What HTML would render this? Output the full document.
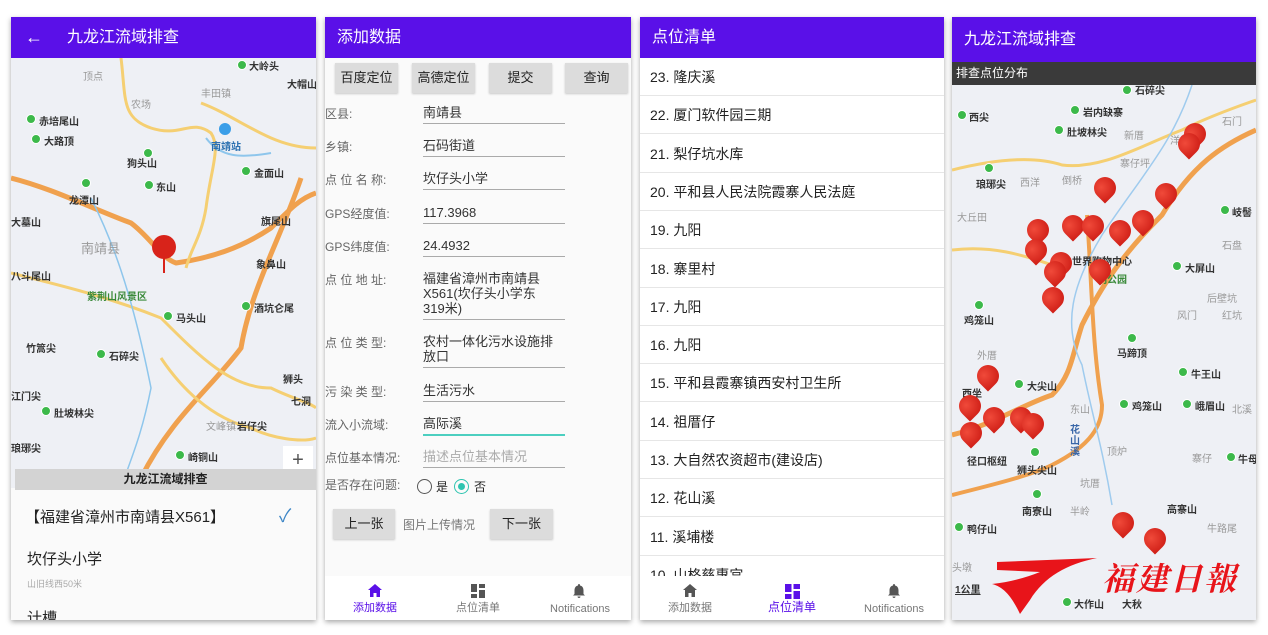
<!DOCTYPE html>
<html><head><meta charset="utf-8">
<style>
*{margin:0;padding:0;box-sizing:border-box}
body{width:1268px;height:635px;background:#fff;position:relative;overflow:hidden;font-family:"Liberation Sans","Noto Sans CJK SC",sans-serif;color:#222}
.scr{position:absolute;top:17px;height:603px;background:#fafafa;overflow:hidden;box-shadow:0 2px 5px rgba(0,0,0,.35)}
.hd{position:absolute;left:0;top:0;right:0;height:41px;background:#5a10e8;color:#fff;font-size:16px;line-height:41px}
.map{position:absolute;background:#eef0f5;overflow:hidden}
.a{position:absolute;font-size:10px;color:#333;white-space:nowrap;font-weight:bold}
.g{position:absolute;font-size:10px;color:#999;white-space:nowrap}
.p{position:absolute;width:10px;height:10px;border-radius:50%;background:#3cb94a;border:1px solid #fff}
.lab{position:absolute;left:0;font-size:12px;color:#666;white-space:nowrap}
.val{position:absolute;left:98px;width:142px;font-size:13px;color:#333;border-bottom:1.5px solid #aaa;padding-bottom:3px;line-height:15px}
.btn{position:absolute;height:30px;background:#dcdcdc;font-size:13px;text-align:center;line-height:30px;color:#222;box-shadow:0 1px 2px rgba(0,0,0,.2)}
.li{position:absolute;left:0;right:0;height:38px;border-bottom:1px solid #e6e6e6;font-size:14px;line-height:38px;padding-left:10px;color:#222;background:#fff}
.nav{position:absolute;left:0;right:0;bottom:0;height:44px;background:#fff}
.ni{position:absolute;bottom:5px;font-size:11px;color:#777;text-align:center;width:100px}
.ic{position:absolute;top:8px}
.pin{position:absolute;width:22px;height:22px;background:radial-gradient(circle at 40% 35%,#f04a3a,#c8150f);border-radius:50% 50% 50% 0;transform:rotate(-45deg)}
</style></head><body>

<!-- Screen 1 -->
<div class="scr" style="left:11px;width:305px">
 <div class="map" style="left:0;top:41px;width:305px;height:430px">
  <svg width="305" height="430" style="position:absolute;left:0;top:0">
   <path d="M0 120 C40 130 80 150 120 165 C140 180 150 200 165 205 C200 200 230 190 260 170 C280 150 290 140 305 135" stroke="#f0a14e" stroke-width="5" fill="none"/>
   <path d="M290 120 C270 180 240 230 230 290 C200 330 160 360 130 420" stroke="#f0a14e" stroke-width="5" fill="none"/>
   <path d="M110 0 C115 40 110 60 140 70 C170 80 180 60 200 75 C210 90 200 110 195 150 C190 180 180 190 175 210" stroke="#f5cf72" stroke-width="3" fill="none"/>
   <path d="M190 45 C230 60 260 90 305 90" stroke="#f5cf72" stroke-width="3" fill="none"/>
   <path d="M0 215 C60 230 100 240 150 260 C190 300 220 330 260 330 C280 340 300 345 305 350" stroke="#f5cf72" stroke-width="3" fill="none"/>
   <path d="M150 300 C170 330 200 360 240 370 C260 380 290 385 305 380" stroke="#f5cf72" stroke-width="3" fill="none"/>
   <path d="M195 80 C210 100 230 100 260 95" stroke="#8ec6ec" stroke-width="2" fill="none"/>
   <path d="M80 140 C100 180 120 230 140 330 C130 380 120 400 110 430" stroke="#8ec6ec" stroke-width="1.5" fill="none"/>
  </svg>
  <div class="g" style="left:72px;top:10px">顶点</div><div class="g" style="left:120px;top:38px">农场</div><div class="g" style="left:190px;top:27px">丰田镇</div>
  <div class="p" style="left:226px;top:2px"></div><div class="a" style="left:238px;top:0">大岭头</div><div class="a" style="left:276px;top:18px">大帽山</div>
  <div class="p" style="left:15px;top:56px"></div><div class="a" style="left:28px;top:55px">赤培尾山</div>
  <div class="p" style="left:20px;top:76px"></div><div class="a" style="left:33px;top:75px">大路顶</div>
  <div class="p" style="left:132px;top:90px"></div><div class="a" style="left:116px;top:97px">狗头山</div>
  <div style="position:absolute;left:208px;top:65px;width:12px;height:12px;border-radius:50%;background:#3a9ee8"></div><div class="a" style="left:200px;top:80px;color:#2a6fb0">南靖站</div>
  <div class="p" style="left:230px;top:108px"></div><div class="a" style="left:243px;top:107px">金面山</div>
  <div class="p" style="left:70px;top:120px"></div><div class="a" style="left:58px;top:134px">龙潭山</div>
  <div class="p" style="left:133px;top:122px"></div><div class="a" style="left:145px;top:121px">东山</div>
  <div class="a" style="left:0;top:156px">大墓山</div><div class="a" style="left:250px;top:155px">旗尾山</div><div class="a" style="left:245px;top:198px">象鼻山</div>
  <div class="g" style="left:70px;top:180px;font-size:13px">南靖县</div>
  <div style="position:absolute;left:141px;top:177px;width:24px;height:24px;border-radius:50%;background:#d8231a"></div><div style="position:absolute;left:152px;top:200px;width:2px;height:15px;background:#d8231a"></div>
  <div class="a" style="left:0;top:210px">八斗尾山</div><div class="a" style="left:76px;top:230px;color:#3a8a3a">紫荆山风景区</div>
  <div class="p" style="left:230px;top:243px"></div><div class="a" style="left:243px;top:242px">酒坑仑尾</div>
  <div class="p" style="left:152px;top:253px"></div><div class="a" style="left:165px;top:252px">马头山</div>
  <div class="a" style="left:15px;top:282px">竹篙尖</div><div class="p" style="left:85px;top:291px"></div><div class="a" style="left:98px;top:290px">石碎尖</div>
  <div class="a" style="left:0;top:330px">江门尖</div><div class="p" style="left:30px;top:348px"></div><div class="a" style="left:43px;top:347px">肚坡林尖</div>
  <div class="a" style="left:272px;top:313px">狮头</div><div class="a" style="left:280px;top:335px">七洞</div>
  <div class="g" style="left:195px;top:360px">文峰镇</div><div class="a" style="left:226px;top:360px">岩仔尖</div>
  <div class="a" style="left:0;top:382px">琅琊尖</div><div class="p" style="left:164px;top:392px"></div><div class="a" style="left:177px;top:391px">崎铜山</div>
  <div style="position:absolute;left:272px;top:388px;width:30px;height:30px;background:#fff;font-size:20px;text-align:center;line-height:28px;color:#555">+</div>
 </div>
 <div class="hd"><span style="position:absolute;left:14px;font-size:18px">←</span><span style="position:absolute;left:56px">九龙江流域排查</span></div>
 <div style="position:absolute;left:4px;top:452px;width:301px;height:21px;background:#d3d3d3;font-size:12px;font-weight:bold;text-align:center;line-height:21px">九龙江流域排查</div>
 <div style="position:absolute;left:0;top:473px;width:305px;height:130px;background:#fafafa">
  <div style="position:absolute;left:14px;top:16px;font-size:15px;color:#222">【福建省漳州市南靖县X561】</div>
  <div style="position:absolute;left:268px;top:12px;font-size:18px;color:#3d86c6">✓</div>
  <div style="position:absolute;left:16px;top:58px;font-size:15px">坎仔头小学</div>
  <div style="position:absolute;left:16px;top:87px;font-size:9px;color:#aaa">山旧线西50米</div>
  <div style="position:absolute;left:16px;top:117px;font-size:15px">计槽</div>
 </div>
</div>

<!-- Screen 2 -->
<div class="scr" style="left:325px;width:306px">
 <div class="hd"><span style="position:absolute;left:12px">添加数据</span></div>
 <div class="btn" style="left:10px;top:46px;width:63px">百度定位</div>
 <div class="btn" style="left:87px;top:46px;width:63px">高德定位</div>
 <div class="btn" style="left:164px;top:46px;width:63px">提交</div>
 <div class="btn" style="left:240px;top:46px;width:63px">查询</div>
 <div style="position:absolute;left:0;top:88px;width:306px">
  <div class="lab" style="top:0">区县:</div><div class="val" style="top:0">南靖县</div>
  <div class="lab" style="top:33px">乡镇:</div><div class="val" style="top:33px">石码街道</div>
  <div class="lab" style="top:66px">点 位 名 称:</div><div class="val" style="top:66px">坎仔头小学</div>
  <div class="lab" style="top:100px">GPS经度值:</div><div class="val" style="top:100px">117.3968</div>
  <div class="lab" style="top:133px">GPS纬度值:</div><div class="val" style="top:133px">24.4932</div>
  <div class="lab" style="top:166px">点 位 地 址:</div><div class="val" style="top:166px;width:142px;padding-right:12px">福建省漳州市南靖县X561(坎仔头小学东319米)</div>
  <div class="lab" style="top:229px">点 位 类 型:</div><div class="val" style="top:229px">农村一体化污水设施排放口</div>
  <div class="lab" style="top:278px">污 染 类 型:</div><div class="val" style="top:278px">生活污水</div>
  <div class="lab" style="top:311px">流入小流域:</div><div class="val" style="top:311px;border-bottom:2px solid #4ccfc0">高际溪</div>
  <div class="lab" style="top:344px">点位基本情况:</div><div class="val" style="top:344px;color:#aaa">描述点位基本情况</div>
 </div>
 <div class="lab" style="top:459px">是否存在问题:</div>
 <div style="position:absolute;left:92px;top:462px;width:15px;height:15px;border:1.5px solid #555;border-radius:50%"></div>
 <div style="position:absolute;left:111px;top:461px;font-size:12px">是</div>
 <div style="position:absolute;left:129px;top:462px;width:15px;height:15px;border:1.5px solid #2ec4b0;border-radius:50%"><div style="margin:2.5px;width:7px;height:7px;border-radius:50%;background:#2ec4b0"></div></div>
 <div style="position:absolute;left:149px;top:461px;font-size:12px">否</div>
 <div class="btn" style="left:8px;top:492px;width:62px">上一张</div>
 <div style="position:absolute;left:78px;top:499px;font-size:12px;color:#777">图片上传情况</div>
 <div class="btn" style="left:165px;top:492px;width:63px">下一张</div>
 <div class="nav">
  <svg class="ic" style="left:43px" width="14" height="13" viewBox="0 0 14 13"><path d="M7 0 L14 6 L12 6 L12 13 L8.5 13 L8.5 9 L5.5 9 L5.5 13 L2 13 L2 6 L0 6Z" fill="#5a10e8"/></svg>
  <div class="ni" style="left:0;color:#5a10e8">添加数据</div>
  <svg class="ic" style="left:146px" width="14" height="14"><rect x="0" y="0" width="6" height="8" fill="#555"/><rect x="0" y="10" width="6" height="4" fill="#555"/><rect x="8" y="0" width="6" height="4" fill="#555"/><rect x="8" y="6" width="6" height="8" fill="#555"/></svg>
  <div class="ni" style="left:103px">点位清单</div>
  <svg class="ic" style="left:248px" width="12" height="14" viewBox="0 0 12 14"><path d="M6 0 C7 0 7 1 7 1.5 C9.5 2 10.5 4 10.5 6.5 L10.5 10 L12 11.5 L0 11.5 L1.5 10 L1.5 6.5 C1.5 4 2.5 2 5 1.5 C5 1 5 0 6 0Z M4.5 12.5 L7.5 12.5 C7.5 13.5 6.8 14 6 14 C5.2 14 4.5 13.5 4.5 12.5Z" fill="#555"/></svg>
  <div class="ni" style="left:205px">Notifications</div>
 </div>
</div>

<!-- Screen 3 -->
<div class="scr" style="left:640px;width:304px;background:#fff">
 <div class="hd"><span style="position:absolute;left:12px">点位清单</span></div>
 <div style="position:absolute;left:0;top:41px;width:304px">
  <div class="li" style="top:0">23. 隆庆溪</div>
  <div class="li" style="top:38.3px">22. 厦门软件园三期</div>
  <div class="li" style="top:76.6px">21. 梨仔坑水库</div>
  <div class="li" style="top:114.9px">20. 平和县人民法院霞寨人民法庭</div>
  <div class="li" style="top:153.2px">19. 九阳</div>
  <div class="li" style="top:191.5px">18. 寨里村</div>
  <div class="li" style="top:229.8px">17. 九阳</div>
  <div class="li" style="top:268.1px">16. 九阳</div>
  <div class="li" style="top:306.4px">15. 平和县霞寨镇西安村卫生所</div>
  <div class="li" style="top:344.7px">14. 祖厝仔</div>
  <div class="li" style="top:383px">13. 大自然农资超市(建设店)</div>
  <div class="li" style="top:421.3px">12. 花山溪</div>
  <div class="li" style="top:459.6px">11. 溪埔楼</div>
  <div class="li" style="top:497.9px">10. 山格慈惠宫</div>
 </div>
 <div class="nav">
  <svg class="ic" style="left:43px" width="14" height="13" viewBox="0 0 14 13"><path d="M7 0 L14 6 L12 6 L12 13 L8.5 13 L8.5 9 L5.5 9 L5.5 13 L2 13 L2 6 L0 6Z" fill="#555"/></svg>
  <div class="ni" style="left:0">添加数据</div>
  <svg class="ic" style="left:145px" width="15" height="15"><rect x="0" y="0" width="6.5" height="8" fill="#5a10e8"/><rect x="0" y="10" width="6.5" height="5" fill="#5a10e8"/><rect x="8.5" y="0" width="6.5" height="5" fill="#5a10e8"/><rect x="8.5" y="7" width="6.5" height="8" fill="#5a10e8"/></svg>
  <div class="ni" style="left:102px;color:#5a10e8;font-size:12px">点位清单</div>
  <svg class="ic" style="left:248px" width="12" height="14" viewBox="0 0 12 14"><path d="M6 0 C7 0 7 1 7 1.5 C9.5 2 10.5 4 10.5 6.5 L10.5 10 L12 11.5 L0 11.5 L1.5 10 L1.5 6.5 C1.5 4 2.5 2 5 1.5 C5 1 5 0 6 0Z M4.5 12.5 L7.5 12.5 C7.5 13.5 6.8 14 6 14 C5.2 14 4.5 13.5 4.5 12.5Z" fill="#555"/></svg>
  <div class="ni" style="left:204px">Notifications</div>
 </div>
</div>

<!-- Screen 4 -->
<div class="scr" style="left:952px;width:304px">
 <div class="map" style="left:0;top:68px;width:304px;height:535px">
  <svg width="304" height="535" style="position:absolute;left:0;top:0">
   <path d="M0 85 C40 75 80 70 110 80 C150 85 190 60 230 45 C260 30 290 20 304 15" stroke="#f5cf72" stroke-width="3" fill="none"/>
   <path d="M304 45 C270 60 240 80 210 130 C170 170 150 200 130 240 C120 270 120 290 100 310 C70 320 40 340 0 350" stroke="#f0a14e" stroke-width="5" fill="none"/>
   <path d="M0 165 C40 160 70 170 100 180" stroke="#f5cf72" stroke-width="3" fill="none"/>
   <path d="M0 410 C40 400 80 390 100 380 C140 360 150 340 150 320 C140 260 140 200 135 130" stroke="#f0a14e" stroke-width="4" fill="none"/>
   <path d="M240 0 C220 60 190 90 150 150 C120 200 110 240 130 280 C140 330 150 360 160 420" stroke="#9fcbee" stroke-width="1.5" fill="none"/>
  </svg>
  <div class="p" style="left:170px;top:0"></div><div class="a" style="left:183px;top:-3px">石碎尖</div>
  <div class="p" style="left:5px;top:25px"></div><div class="a" style="left:17px;top:24px">西尖</div>
  <div class="p" style="left:118px;top:20px"></div><div class="a" style="left:131px;top:19px">岩内缺寨</div>
  <div class="p" style="left:102px;top:40px"></div><div class="a" style="left:115px;top:39px">肚坡林尖</div>
  <div class="g" style="left:172px;top:42px">新厝</div><div class="g" style="left:218px;top:47px">洋尾</div><div class="g" style="left:270px;top:28px">石门</div>
  <div class="g" style="left:168px;top:70px">寨仔坪</div>
  <div class="p" style="left:32px;top:78px"></div><div class="a" style="left:24px;top:91px">琅琊尖</div>
  <div class="g" style="left:68px;top:89px">西洋</div><div class="g" style="left:110px;top:87px">倒桥</div>
  <div class="g" style="left:5px;top:124px">大丘田</div><div class="p" style="left:268px;top:120px"></div><div class="a" style="left:280px;top:119px">岐髻</div>
  <div class="g" style="left:270px;top:152px">石盘</div>
  <div class="a" style="left:120px;top:168px">世界购物中心</div><div class="a" style="left:145px;top:186px;color:#3a8a3a">明公园</div>
  <div class="p" style="left:220px;top:176px"></div><div class="a" style="left:233px;top:175px">大屏山</div>
  <div class="g" style="left:255px;top:205px">后壁坑</div><div class="g" style="left:225px;top:222px">风门</div><div class="g" style="left:270px;top:222px">红坑</div>
  <div class="p" style="left:22px;top:215px"></div><div class="a" style="left:12px;top:227px">鸡笼山</div>
  <div class="p" style="left:175px;top:248px"></div><div class="a" style="left:165px;top:260px">马蹄顶</div>
  <div class="g" style="left:25px;top:262px">外厝</div>
  <div class="p" style="left:226px;top:282px"></div><div class="a" style="left:239px;top:281px">牛王山</div>
  <div class="a" style="left:10px;top:300px">西坐</div><div class="p" style="left:62px;top:294px"></div><div class="a" style="left:75px;top:293px">大尖山</div>
  <div class="g" style="left:118px;top:316px">东山</div><div class="p" style="left:167px;top:314px"></div><div class="a" style="left:180px;top:313px">鸡笼山</div>
  <div class="p" style="left:230px;top:314px"></div><div class="a" style="left:243px;top:313px">峨眉山</div><div class="g" style="left:280px;top:316px">北溪</div>
  <div class="a" style="left:118px;top:340px;color:#3866a8;width:12px;white-space:normal;line-height:11px">花山溪</div>
  <div class="g" style="left:155px;top:358px">顶炉</div><div class="g" style="left:240px;top:365px">寨仔</div>
  <div class="p" style="left:274px;top:367px"></div><div class="a" style="left:286px;top:366px">牛母</div>
  <div class="a" style="left:15px;top:368px">径口枢纽</div><div class="p" style="left:78px;top:362px"></div><div class="a" style="left:65px;top:377px">狮头尖山</div>
  <div class="g" style="left:128px;top:390px">坑厝</div>
  <div class="p" style="left:80px;top:404px"></div><div class="a" style="left:70px;top:418px">南寮山</div><div class="g" style="left:118px;top:418px">半岭</div>
  <div class="a" style="left:215px;top:416px">高寨山</div><div class="g" style="left:255px;top:435px">牛路尾</div>
  <div class="p" style="left:2px;top:437px"></div><div class="a" style="left:15px;top:436px">鸭仔山</div>
  <div class="g" style="left:0;top:474px">头墩</div>
  <div class="a" style="left:3px;top:496px;text-decoration:underline">1公里</div>
  <div class="p" style="left:110px;top:512px"></div><div class="a" style="left:122px;top:511px">大作山</div>
  <div class="a" style="left:170px;top:511px">大秋</div>
 </div>
 <div class="hd" style="height:45px;line-height:45px"><span style="position:absolute;left:12px">九龙江流域排查</span></div>
 <div style="position:absolute;left:0;top:45px;width:304px;height:23px;background:#3a3a3a;color:#fff;font-size:12px;line-height:23px;padding-left:4px">排查点位分布</div>
 <div class="pin" style="left:232px;top:106px"></div><div class="pin" style="left:226px;top:116px"></div>
 <div class="pin" style="left:142px;top:160px"></div><div class="pin" style="left:203px;top:166px"></div>
 <div class="pin" style="left:75px;top:202px"></div><div class="pin" style="left:110px;top:198px"></div><div class="pin" style="left:130px;top:198px"></div>
 <div class="pin" style="left:157px;top:203px"></div><div class="pin" style="left:180px;top:193px"></div>
 <div class="pin" style="left:73px;top:222px"></div><div class="pin" style="left:98px;top:235px"></div><div class="pin" style="left:92px;top:244px"></div>
 <div class="pin" style="left:137px;top:242px"></div><div class="pin" style="left:90px;top:270px"></div>
 <div class="pin" style="left:25px;top:348px"></div><div class="pin" style="left:7px;top:378px"></div><div class="pin" style="left:31px;top:390px"></div>
 <div class="pin" style="left:58px;top:390px"></div><div class="pin" style="left:70px;top:396px"></div><div class="pin" style="left:8px;top:405px"></div>
 <div class="pin" style="left:160px;top:495px"></div><div class="pin" style="left:192px;top:511px"></div>
 <!-- watermark -->
 <svg width="304" height="80" style="position:absolute;left:0;top:525px">
  <path d="M45 20 L145 16 C115 22 92 35 78 58 L68 72 C60 55 52 45 40 42 C60 40 75 35 88 30 L45 28 Z" fill="#e8141a"/>
 </svg>
 <div style="position:absolute;left:150px;top:540px;font-size:32px;line-height:40px;color:#e8141a;font-family:'Noto Serif CJK SC',serif;font-style:italic;font-weight:bold;letter-spacing:2px;white-space:nowrap">福建日報</div>
</div>
</body></html>
